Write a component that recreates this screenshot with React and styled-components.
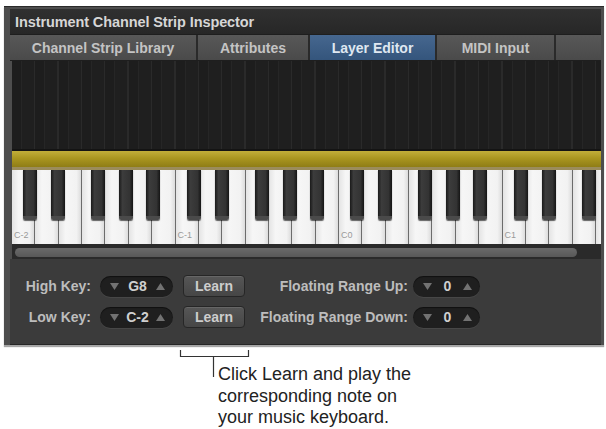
import styled, { createGlobalStyle } from "styled-components";

const KEY_W = 23.36;
const OCTAVE = KEY_W * 7;
const BLACK_OFFSETS = [13, 41, 81, 109, 136];
const OCTAVE_LABELS = ["C-2", "C-1", "C0", "C1"];

//#region styled components
const GlobalStyle = createGlobalStyle`
  html, body {
    margin: 0;
    padding: 0;
    background: #ffffff;
  }
  body {
    font-family: "Liberation Sans", Arial, sans-serif;
  }
`;

const Page = styled.div`
  width: 606px;
  height: 429px;
  position: relative;
  overflow: hidden;
  background: #ffffff;
`;

const Window = styled.div`
  box-sizing: border-box;
  width: 600px;
  margin: 6px 0 0 4px;
  padding: 2px 3px 0 6px;
  background: #4d4d4d;
  border-top: 1px solid #2a2a2a;
  box-shadow: 0 2px 1px rgba(0, 0, 0, 0.35);
  display: flex;
  flex-direction: column;
`;

const TitleBar = styled.div`
  height: 25px;
  display: flex;
  align-items: center;
  padding-left: 5px;
  background: linear-gradient(#303030, #272727);
  color: #d6d6d6;
  font-size: 14.5px;
  font-weight: bold;
  letter-spacing: -0.1px;
`;

const TabBar = styled.div`
  height: 27px;
  display: flex;
  background: linear-gradient(#585858, #4a4a4a);
  border-top: 1px solid #1e1e1e;
  border-bottom: 1px solid #1e1e1e;
  box-sizing: border-box;
`;

const Tab = styled.div`
  width: ${(p) => p.$w}px;
  display: flex;
  align-items: center;
  justify-content: center;
  font-size: 14px;
  font-weight: bold;
  color: ${(p) => (p.$active ? "#dfe7f1" : "#c4c4c4")};
  background: ${(p) =>
    p.$active ? "linear-gradient(#46678f, #34557c)" : "transparent"};
  border-right: 2px solid #2a2a2a;
  box-sizing: border-box;
`;

const TabFill = styled.div`
  flex: 1;
`;

const LayerArea = styled.div`
  height: 88px;
  margin-left: 2px;
  background-color: #1d1d1d;
  background-image: repeating-linear-gradient(
    90deg,
    #1d1d1d 0px,
    #1d1d1d 9px,
    #262626 9px,
    #262626 10px,
    #1f1f1f 10px,
    #1f1f1f 22px,
    #2a2a2a 22px,
    #2a2a2a ${KEY_W}px
  );
  border-bottom: 2px solid #141414;
`;

const RangeBar = styled.div`
  height: 16px;
  margin-left: 2px;
  background: linear-gradient(#c2ae3a, #aa9620 45%, #8f7d16);
  border-bottom: 3px solid #9b8c5c;
`;

const Keyboard = styled.div`
  position: relative;
  height: 75px;
  margin-left: 2px;
  display: flex;
  overflow: hidden;
  background: #2a2a2a;
`;

const WhiteKey = styled.div`
  position: relative;
  flex: 0 0 ${KEY_W}px;
  box-sizing: border-box;
  height: 74px;
  background: linear-gradient(90deg, #e4e4e4, #f6f6f6 30%, #f2f2f2 80%, #dcdcdc);
  border-right: 1.5px solid #6c6c6c;
`;

const KeyLabel = styled.span`
  position: absolute;
  left: 2px;
  bottom: 4px;
  font-size: 9px;
  color: #9a9a9a;
`;

const BlackKey = styled.div`
  position: absolute;
  top: 0;
  width: 14px;
  height: 50px;
  box-sizing: border-box;
  border-radius: 0 0 2px 2px;
  background: linear-gradient(90deg, #1a1a1a, #3c3c3c 25%, #333 75%, #151515);
  border-bottom: 4px solid #4a4a4a;
  box-shadow: 0 1px 1px rgba(0, 0, 0, 0.6);
`;

const Scroller = styled.div`
  height: 14px;
  margin-left: 2px;
  display: flex;
  align-items: center;
  padding-left: 3px;
  background: #2a2a2a;
  box-sizing: border-box;
`;

const Thumb = styled.div`
  width: 562px;
  height: 9px;
  border-radius: 5px;
  background: linear-gradient(#6a6a6a, #585858);
`;

const Controls = styled.div`
  height: 86px;
  box-sizing: border-box;
  padding-top: 16px;
  background: #3b3b3b;
  border-bottom: 1px solid #262626;
  display: grid;
  grid-template-columns: 81px 82px 72px 168px 67px;
  grid-auto-rows: 22px;
  row-gap: 9px;
`;

const Label = styled.div`
  display: flex;
  align-items: center;
  justify-content: flex-end;
  padding-right: ${(p) => p.$pad}px;
  font-size: 14px;
  font-weight: bold;
  color: #bdbdbd;
  white-space: nowrap;
`;

const Stepper = styled.div`
  align-self: center;
  height: 21px;
  margin-left: ${(p) => p.$ml}px;
  border-radius: 11px;
  background: #1f1f1f;
  box-shadow: inset 0 1px 1px rgba(0, 0, 0, 0.5), 0 1px 0 #474747;
  display: flex;
  align-items: center;
  justify-content: space-between;
  padding: 0 8px 0 10px;
  font-size: 14px;
  font-weight: bold;
  color: #cfcfcf;
`;

const LearnButton = styled.button`
  margin-left: 10px;
  width: 62px;
  height: 22px;
  padding: 0;
  border: 1px solid #262626;
  border-radius: 4px;
  background: linear-gradient(#565656, #464646);
  box-shadow: inset 0 1px 0 #666;
  color: #cdcdcd;
  font-family: "Liberation Sans", Arial, sans-serif;
  font-size: 14px;
  font-weight: bold;
`;

const Annotation = styled.div`
  position: relative;
  height: 80px;
`;

const Leader = styled.svg`
  position: absolute;
  left: 178px;
  top: 3px;
`;

const Note = styled.p`
  margin: 0;
  padding: 19px 0 0 218px;
  font-size: 18px;
  line-height: 21.5px;
  color: #222222;
`;
//#endregion

const Arrow = ({ up }) => (
  <svg width="9" height="7" viewBox="0 0 9 7">
    <polygon
      points={up ? "4.5,0 9,7 0,7" : "0,0 9,0 4.5,7"}
      fill="#727272"
    />
  </svg>
);

const ValueStepper = ({ value, ml }) => (
  <Stepper $ml={ml}>
    <Arrow />
    <span>{value}</span>
    <Arrow up />
  </Stepper>
);

const App = () => {
  const whiteKeys = Array.from({ length: 26 }, (_, i) => i);
  const blackKeys = [];
  for (let o = 0; o < 4; o++) {
    BLACK_OFFSETS.forEach((off) => blackKeys.push(o * OCTAVE + off - 2));
  }

  return (
    <Page>
      <GlobalStyle />
      <Window>
        <TitleBar>Instrument Channel Strip Inspector</TitleBar>
        <TabBar>
          <Tab $w={188}>Channel Strip Library</Tab>
          <Tab $w={112}>Attributes</Tab>
          <Tab $w={127} $active>
            Layer Editor
          </Tab>
          <Tab $w={119}>MIDI Input</Tab>
          <TabFill />
        </TabBar>
        <LayerArea />
        <RangeBar />
        <Keyboard>
          {whiteKeys.map((i) => (
            <WhiteKey key={i}>
              {i % 7 === 0 && OCTAVE_LABELS[i / 7] ? (
                <KeyLabel>{OCTAVE_LABELS[i / 7]}</KeyLabel>
              ) : null}
            </WhiteKey>
          ))}
          {blackKeys.map((x) => (
            <BlackKey key={x} style={{ left: x }} />
          ))}
        </Keyboard>
        <Scroller>
          <Thumb />
        </Scroller>
        <Controls>
          <Label $pad={0}>High Key:</Label>
          <ValueStepper value="G8" ml={9} />
          <LearnButton>Learn</LearnButton>
          <Label $pad={5}>Floating Range Up:</Label>
          <ValueStepper value="0" ml={0} />

          <Label $pad={0}>Low Key:</Label>
          <ValueStepper value="C-2" ml={9} />
          <LearnButton>Learn</LearnButton>
          <Label $pad={5}>Floating Range Down:</Label>
          <ValueStepper value="0" ml={0} />
        </Controls>
      </Window>
      <Annotation>
        <Leader width="74" height="32" viewBox="0 0 74 32">
          <path
            d="M2.5 2 V8.5 H70.5 V2 M35.5 8.5 V29"
            fill="none"
            stroke="#333"
            strokeWidth="1.2"
          />
        </Leader>
        <Note>
          Click Learn and play the
          <br />
          corresponding note on
          <br />
          your music keyboard.
        </Note>
      </Annotation>
    </Page>
  );
};

export default App;
